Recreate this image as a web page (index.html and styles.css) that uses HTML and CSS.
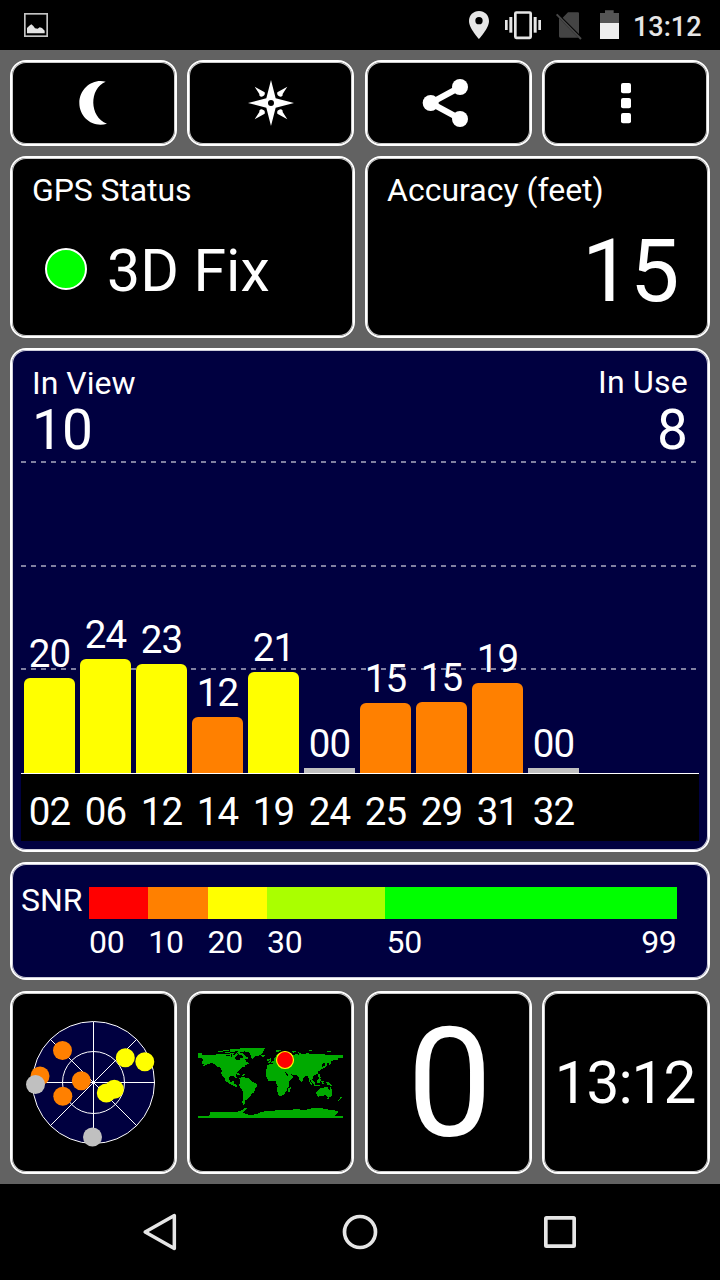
FILE: index.html
```html
<!DOCTYPE html>
<html lang="en">
<head>
<meta charset="utf-8">
<title>GPS Test</title>
<link rel="stylesheet" href="styles.css">
</head>
<body>
<header class="statusbar">
  <svg class="status-picture" width="24" height="24" viewBox="0 0 72 72"><rect x="2.500" y="2.500" width="67" height="67" fill="none" stroke="#c4c4c4" stroke-width="5"/><path d="M9 61V45l7-7 6-4 6 5 5 7 8 1 6-4 7 2 8 8v8z" fill="#e4e4e4"/></svg>
  <svg class="status-icons" width="160" height="50" viewBox="0 0 480 150">
    <path d="M57 33c-17 0-30 13-30 30 0 22 30 54 30 54s30-32 30-54c0-17-13-30-30-30zm0 40a11 11 0 1 1 0-22 11 11 0 0 1 0 22z" fill="#e6e6e6"/>
    <g fill="#e6e6e6"><rect x="135" y="60" width="8" height="30"/><rect x="148" y="51" width="9" height="47"/><rect x="221" y="51" width="9" height="47"/><rect x="235" y="60" width="8" height="30"/></g>
    <rect x="166" y="37.500" width="46" height="76" rx="3" fill="none" stroke="#e6e6e6" stroke-width="8"/>
    <path d="M308 53l16-16h30q3 0 3 3v62zM297 54l58 59h-54q-4 0-4-4z" fill="#444"/>
    <path d="M290 43l73 74" stroke="#484848" stroke-width="6"/>
    <path d="M420 69V39h15v-8h26v8h16v30z" fill="#555"/><path d="M420 69h57v48h-57z" fill="#eee"/>
  </svg>
  <span class="status-time">13:12</span>
</header>
<main class="app">
  <nav class="row actions">
    <button class="card action" aria-label="Night mode"><svg width="50" height="50" viewBox="0 0 150 150"><path d="M110 11C73 0 31 30 31 75c0 44 41 75 83 62-54-20-54-106-4-126z" fill="#fff"/></svg></button>
    <button class="card action" aria-label="Compass"><svg width="50" height="50" viewBox="0 0 150 150"><g fill="#fff"><path fill-rule="evenodd" d="M75 6l14 55 55 14-55 14-14 55-14-55-55-14 55-14zM75 66a9 9 0 1 0 0 18 9 9 0 0 0 0-18z"/><path d="M26 26l30 17q3 10-9 13-8 0-7-8zM124 26L94 43q-3 10 9 13 8 0 7-8zM26 124l30-17q3-10-9-13-8 0-7 8zM124 124l-30-17q-3-10 9-13 8 0 7 8z"/></g></svg></button>
    <button class="card action" aria-label="Share"><svg width="54" height="50" viewBox="-6 0 162 150"><path d="M112 27L23 75l89 48" fill="none" stroke="#fff" stroke-width="18"/><g fill="#fff"><circle cx="23" cy="75" r="24"/><circle cx="111" cy="27" r="24"/><circle cx="111" cy="123" r="24"/></g></svg></button>
    <button class="card action" aria-label="More"><svg width="50" height="50" viewBox="0 0 150 150"><g fill="#fff"><rect x="63" y="15" width="30" height="31" rx="6"/><rect x="63" y="60" width="30" height="31" rx="6"/><rect x="63" y="105" width="30" height="31" rx="6"/></g></svg></button>
  </nav>
  <section class="row summary">
    <div class="card info">
      <div class="label tight">GPS Status</div>
      <div class="fix"><span class="fix-dot"></span><span>3D Fix</span></div>
    </div>
    <div class="card info">
      <div class="label">Accuracy (feet)</div>
      <div class="accuracy">15</div>
    </div>
  </section>
  <section class="card chart">
    <div class="plot">
      <div class="chart-head">
        <div class="count"><div class="count-label">In View</div><div class="count-value">10</div></div>
        <div class="count count-right"><div class="count-label">In Use</div><div class="count-value">8</div></div>
      </div>
      <div class="bars">
        <div class="sat"><span>20</span><i class="bar good" style="height:95px"></i></div>
        <div class="sat"><span>24</span><i class="bar good" style="height:114px"></i></div>
        <div class="sat"><span>23</span><i class="bar good" style="height:109px"></i></div>
        <div class="sat"><span>12</span><i class="bar weak" style="height:56px"></i></div>
        <div class="sat"><span>21</span><i class="bar good" style="height:101px"></i></div>
        <div class="sat"><span>00</span><i class="bar none" style="height:5px"></i></div>
        <div class="sat"><span>15</span><i class="bar weak" style="height:70px"></i></div>
        <div class="sat"><span>15</span><i class="bar weak" style="height:71px"></i></div>
        <div class="sat"><span>19</span><i class="bar weak" style="height:90px"></i></div>
        <div class="sat"><span>00</span><i class="bar none" style="height:5px"></i></div>
      </div>
    </div>
    <div class="ids"><span>02</span><span>06</span><span>12</span><span>14</span><span>19</span><span>24</span><span>25</span><span>29</span><span>31</span><span>32</span></div>
  </section>
  <section class="card snr">
    <div class="snr-title">SNR</div>
    <div class="scale">
      <div class="step"><i class="swatch s00"></i><span>00</span></div>
      <div class="step"><i class="swatch s10"></i><span>10</span></div>
      <div class="step"><i class="swatch s20"></i><span>20</span></div>
      <div class="step"><i class="swatch s30"></i><span>30</span></div>
      <div class="step"><i class="swatch s50"></i><div class="ends"><span>50</span><span>99</span></div></div>
    </div>
  </section>
  <section class="row tiles">
    <div class="card tile">
      <svg width="163" height="179" viewBox="12 993 163 179">
        <circle cx="93.500" cy="1082.500" r="61" fill="#000040"/>
        <g fill="none" stroke="#fff"><circle cx="93.500" cy="1082.500" r="61"/><circle cx="93.500" cy="1082.500" r="31"/><path d="M32.500 1082.500h122M93.500 1021.500v122M50.400 1039.400l86.200 86.200M50.400 1125.600l86.200-86.200" shape-rendering="crispEdges"/></g>
        <g fill="#ff8000"><circle cx="62.500" cy="1050.500" r="9.500"/><circle cx="40" cy="1076" r="9.500"/><circle cx="81.300" cy="1080.700" r="9.500"/><circle cx="62.800" cy="1096.300" r="9.500"/></g>
        <g fill="#ff0"><circle cx="125.300" cy="1057.700" r="9.500"/><circle cx="144.800" cy="1061.700" r="9.500"/><circle cx="114.300" cy="1089.300" r="9.500"/><circle cx="106.300" cy="1093" r="9.500"/></g>
        <g fill="#c0c0c0"><circle cx="35.500" cy="1084.500" r="9.500"/><circle cx="92.500" cy="1137" r="9.500"/></g>
      </svg>
    </div>
    <div class="card tile">
      <svg class="map" width="160" height="95" viewBox="0 0 480 285">
        <g fill="#0a0" shape-rendering="crispEdges">
          <path d="M24 54h12v5h42l4-3h40l10 4 6-6 6 5-6 4-4 8 4 4 10 2 4-10 4 2 9 5 6 8 6 1 0 4-12 3 3 4-12 4-8 8-8 7-2 8 3 9-4 1-5-8-9-1-5 4-1 8 4 6 10-1 0 8 9 2 3 8-5 0-11-7-9-4-11-8-4-9-6-5 0 0-3-9 1-8-3-8-9-4-8-7-8-3-11 1-12 7-6 2 4-8-7-2v-7h5v-5h-5v-3H24z"/>
          <path d="M84 48h15v3h-15zM100 45h18v4h-18zM104 52h16v3h-16zM121 42h24v3l-12 6h-12zM120 54h12v4h-12zM144 55l12-2 10 8 4 5 7 3-4 4-6-2-5 4-5-5 4-7-13-4zM146 41l22-2 12 1-6 5-16 6-18 3 8-7-14-1zM166 43l22-4 36 1-4 9-3 7-10 6-12 2-8 8-4-7-2-7-6-6-12-1zM215 60h10v3h-3v3h-6v-3h-4z"/>
          <path d="M133 114l12 1 6 4-8 0zM152 119l12-1 3 3-12 1z"/>
          <path d="M148 129l9-3 12 2 8 3 8 9 16 7-1 9-5 6-2 9-8 5-2 7-8 6-4 5-6 2-1 9-3 4 5 2-8-3-1-8 2-13 1-16-4-7-5-5-4-8 3-10z"/>
          <path d="M228 104l5-3 15-3 10 1 2 6 14 2 10-2 6 5 8 15 10-1-2 7-8 7-2 8 1 8-5 5-2 7-5 8-5 6-7 4-7-3-4-11-1-8 2-9-5-7 0-7-4-2-9 2-9-1-6-8-1-9zM295 160l6-4 2 3-4 11-4 1z"/>
          <path d="M232 97v-8l10-1-2-4 6-5 8-3-2-6 5-6 6-7 8-4 12 4 18 3 17-2 9 1-2-7 11 5 18-2 15 2 20 1 30 1 40 2v8l-14 1 0 4-12 1-8 3-4 10-4 4-1-9-8-1-8 1-6 7 3 6-3 8-9 5-3-1 3 6-8 6-8 3 0 6-5 6-4-1 1 8 5 4 1 5-5-4-5-8 0-9-4-6-6 0-8 8-1 6-4 4-6-7-2-9-8-6-9 0 3 5-7 7-13 5-4-1-5-8-5-11-1-7-13 0-3-4-8 0 5 5-2 3-9-7-6-3-4 3-7 7z"/>
          <path d="M238 72l3-3 3 5-1 8-9 2 5-6zM232 73h4v5h-4zM258 45h16v3h-6l-4 4-6-3zM306 49l14-1-9 6zM358 44h9v4h-9zM410 49h14v3h-14zM406 81l4 0 1 10-4 5-9 5-9 2 10-8 7-3zM385 116h4v8l5 4-3 3-7-7zM360 128l5 3 10 13-1 6-7-7-9-11zM371 151h20v3h-20zM382 135l8-6 3 5-4 10-8 0zM394 137h8v3h-4l4 8-6 0zM408 140l11 3 8 10-5-1-11-4z"/>
          <path d="M379 170l7-4 7-7 8 0 5-3 8 0 0 6 5 3 2-10 5 10 1 6-1 9-4 7-8 1-7-7-12 1-11 3-4-3zM410 188h8v4h-5zM452 186h4v3l-9 8h-4l7-6z"/>
          <path d="M24 249v-6h32v-4h4v-7h40l18-2 16 2 16-4 12-7 9-4v3l-7 6-4 7 10 5 12 2 18-3 10-5 16-3 18-1 20-3 22 1 14 0 14-4 20 2 14 0 16-4 28-1 17 4 28 4 8 3-9 12h24v7z"/>
        </g>
        <g stroke="#000" stroke-width="3" fill="none" shape-rendering="crispEdges"><path d="M108 61l12 2M123 57v9M285 110l9 13M302 118l11 7M240 84l8 1"/></g>
        <circle cx="285" cy="75" r="25.500" fill="red" stroke="#ff0" stroke-width="3.500"/>
      </svg>
    </div>
    <div class="card tile speed">0</div>
    <div class="card tile clock">13:12</div>
  </section>
</main>
<footer class="navbar">
  <svg width="40" height="40" viewBox="0 0 120 120"><path d="M15.500 60L103 10.500v99z" fill="none" stroke="#e6e6e6" stroke-width="10.500" stroke-linejoin="round"/></svg>
  <svg width="40" height="40" viewBox="0 0 120 120"><circle cx="60" cy="60" r="46.500" fill="none" stroke="#e6e6e6" stroke-width="11"/></svg>
  <svg width="40" height="40" viewBox="0 0 120 120"><rect x="17.500" y="17.500" width="85" height="85" rx="2" fill="none" stroke="#e6e6e6" stroke-width="11"/></svg>
</footer>
</body>
</html>
```
FILE: styles.css
```css
* { box-sizing: border-box; }
body {
  margin: 0;
  width: 720px;
  height: 1280px;
  display: flex;
  flex-direction: column;
  background: #626262;
  color: #fff;
  font-family: Roboto, "Liberation Sans", sans-serif;
  overflow: hidden;
}
svg { display: block; flex: none; }
.statusbar {
  height: 50px;
  background: #000;
  display: flex;
  align-items: center;
  padding-left: 24px;
}
.status-icons { margin-left: 412px; }
.status-time {
  margin-left: 13px;
  font-size: 27px;
  font-weight: 500;
  line-height: 32px;
  padding-top: 3px;
  color: #e6e6e6;
}
.app {
  height: 1134px;
  padding: 10px 10px 10px;
  display: flex;
  flex-direction: column;
  gap: 10px;
}
.row { display: flex; gap: 10.330px; }
.card {
  border: 2px solid #fff;
  border-radius: 16px;
  background: #000;
  color: #fff;
  box-shadow: inset 0 0 0 1px rgba(255, 255, 255, .8);
}
.actions { height: 86px; }
.action {
  flex: none;
  width: 167px;
  padding: 0;
  display: flex;
  align-items: center;
  justify-content: center;
}
.summary { height: 182px; gap: 10px; }
.info { flex: 1; padding: 12px 29px 0 20px; }
.label { font-size: 32px; line-height: 40px; }
.tight { letter-spacing: -0.100px; }
.fix {
  display: flex;
  align-items: center;
  gap: 20px;
  margin-top: 26px;
  padding-left: 13px;
  font-size: 59px;
  line-height: 70px;
}
.fix-dot {
  width: 42px;
  height: 42px;
  margin-bottom: 4px;
  border: 2px solid #fff;
  border-radius: 50%;
  background: #0f0;
}
.accuracy {
  margin-top: 16px;
  font-size: 88px;
  line-height: 90px;
  text-align: right;
  letter-spacing: -1.500px;
  margin-right: 1px;
}
.chart { height: 504px; padding: 0 9px; background: #000040; }
.plot {
  height: 424px;
  display: flex;
  flex-direction: column;
  border-bottom: 1px solid #fff;
  background-image:
    repeating-linear-gradient(90deg, #8080a0 0 5px, transparent 5px 10px),
    repeating-linear-gradient(90deg, #8080a0 0 5px, transparent 5px 10px),
    repeating-linear-gradient(90deg, #8080a0 0 5px, transparent 5px 10px);
  background-size: 675px 2px;
  background-position: 0 111px, 0 215px, 0 318px;
  background-repeat: no-repeat;
}
.chart-head {
  display: flex;
  justify-content: space-between;
  padding: 14px 11px 0;
}
.count-label { font-size: 32px; line-height: 38px; }
.count-value { font-size: 55px; line-height: 56px; letter-spacing: -1px; }
.count-right { text-align: right; }
.count-right .count-label { margin: -1px 0 1px; letter-spacing: 0.250px; }
.count-right .count-value { letter-spacing: 0; }
.bars {
  flex: 1;
  display: flex;
  align-items: flex-end;
  gap: 5px;
  padding-left: 3px;
}
.sat {
  width: 51px;
  font-size: 38.500px;
  text-align: center;
}
.sat span {
  display: block;
  line-height: 40px;
  margin-bottom: 4px;
}
.sat span, .ids span { letter-spacing: -1px; }
.bar { display: block; border-radius: 6px 6px 0 0; }
.good { background: #ff0; }
.weak { background: #ff8000; }
.none { background: #c0c0c0; border-radius: 0; }
.ids {
  height: 67px;
  padding-left: 3px;
  display: flex;
  gap: 5px;
  background: #000;
  font-size: 38.500px;
  line-height: 76px;
}
.ids span { width: 51px; text-align: center; }
.snr {
  height: 118px;
  padding: 23px 0 0 9px;
  display: flex;
  background: #000040;
  font-size: 32px;
}
.snr-title { width: 68px; line-height: 26px; }
.scale {
  width: 587.500px;
  display: grid;
  grid-template-columns: 59.300px 59.300px 59.400px 118px 1fr;
}
.step { line-height: 46px; letter-spacing: -0.300px; }
.swatch { display: block; height: 32px; }
.ends { display: flex; justify-content: space-between; padding-left: 1.500px; }
.s00 { background: #f00; }
.s10 { background: #ff8000; }
.s20 { background: #ff0; }
.s30 { background: #af0; }
.s50 { background: #0f0; }
.tiles { height: 183px; margin-top: 1px; }
.tile {
  flex: none;
  width: 167px;
  display: flex;
  align-items: center;
  justify-content: center;
}
.map { margin-right: 2px; }
.speed { font-size: 152px; line-height: 179px; padding: 3px 0 0 3px; }
.clock { width: 168px; padding-right: 2px; font-size: 58.500px; letter-spacing: -1px; }
.navbar {
  height: 96px;
  background: #000;
  display: flex;
  justify-content: center;
  align-items: center;
  gap: 160px;
}
```
